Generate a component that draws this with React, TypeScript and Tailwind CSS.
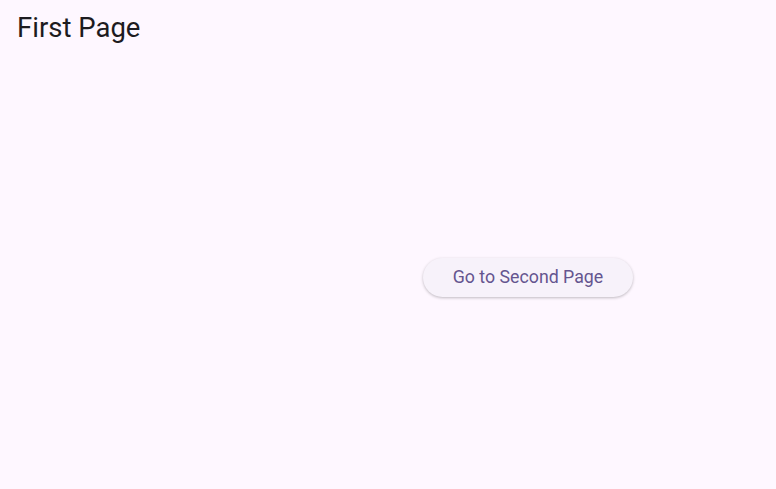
export default function App() {
  return (
    <div className="flex h-[489px] w-[776px] flex-col bg-[#fef7ff] font-['Roboto',sans-serif]">
      <div className="h-[56px] pl-[17px] pt-[12px]">
        <h1 className="text-[27.5px] leading-[32px] text-[#1d1b20]">First Page</h1>
      </div>
      <div className="flex flex-1 items-center justify-center pl-[280px] pt-[10px]">
        <button className="h-[39px] rounded-full bg-[#f7f2fa] px-[30px] text-[17.75px] text-[#65558f] shadow-[0_1px_3px_rgba(0,0,0,0.25)]">
          Go to Second Page
        </button>
      </div>
    </div>
  );
}
